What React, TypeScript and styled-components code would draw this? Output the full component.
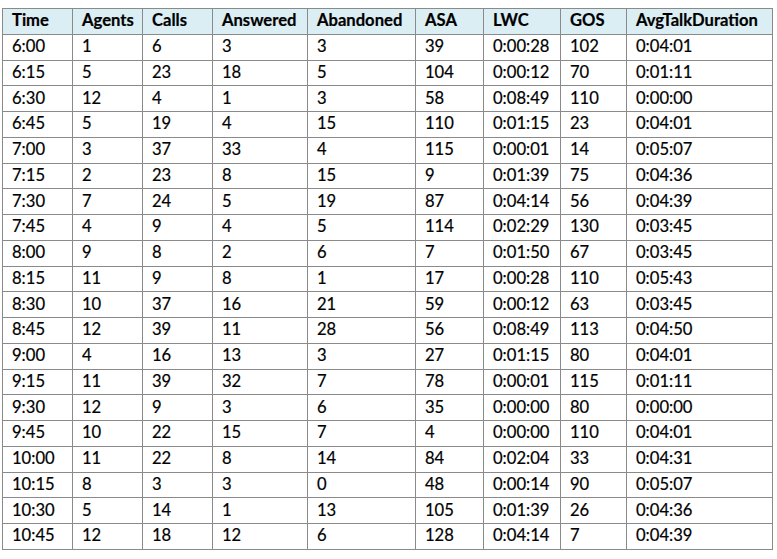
import React from "react";
import styled, { createGlobalStyle } from "styled-components";

const Global = createGlobalStyle`
  html, body { margin: 0; padding: 0; background: #ffffff; }
  body { font-family: Lato, "Open Sans", sans-serif; }
`;

const Page = styled.div`
  padding: 8px 0 0 2px;
`;

const Table = styled.table`
  border-collapse: collapse;
  table-layout: fixed;
  width: 770px;
  font-family: Lato, "Open Sans", sans-serif;
  font-size: 16.6px;
  color: #000000;
  border: 1px solid #5e5e5e;
`;

const Row = styled.tr<{ $head?: boolean }>`
  height: 25.76px;
  background: ${(p) => (p.$head ? "#dbeef3" : "#ffffff")};
`;

const Cell = styled.td`
  border: 1px solid #8a8a8a;
  padding: 0 0 2px 9px;
  white-space: nowrap;
  overflow: hidden;
  line-height: 20px;
  -webkit-text-stroke: 0.2px #000;
`;

const HeadCell = styled(Cell).attrs({ as: "th" })`
  font-weight: 700;
  text-align: left;
`;

const widths = [70, 70, 70, 95, 108, 68, 77, 66, 146];
const headers = ["Time", "Agents", "Calls", "Answered", "Abandoned", "ASA", "LWC", "GOS", "AvgTalkDuration"];

const rows: string[][] = [
  ["6:00", "1", "6", "3", "3", "39", "0:00:28", "102", "0:04:01"],
  ["6:15", "5", "23", "18", "5", "104", "0:00:12", "70", "0:01:11"],
  ["6:30", "12", "4", "1", "3", "58", "0:08:49", "110", "0:00:00"],
  ["6:45", "5", "19", "4", "15", "110", "0:01:15", "23", "0:04:01"],
  ["7:00", "3", "37", "33", "4", "115", "0:00:01", "14", "0:05:07"],
  ["7:15", "2", "23", "8", "15", "9", "0:01:39", "75", "0:04:36"],
  ["7:30", "7", "24", "5", "19", "87", "0:04:14", "56", "0:04:39"],
  ["7:45", "4", "9", "4", "5", "114", "0:02:29", "130", "0:03:45"],
  ["8:00", "9", "8", "2", "6", "7", "0:01:50", "67", "0:03:45"],
  ["8:15", "11", "9", "8", "1", "17", "0:00:28", "110", "0:05:43"],
  ["8:30", "10", "37", "16", "21", "59", "0:00:12", "63", "0:03:45"],
  ["8:45", "12", "39", "11", "28", "56", "0:08:49", "113", "0:04:50"],
  ["9:00", "4", "16", "13", "3", "27", "0:01:15", "80", "0:04:01"],
  ["9:15", "11", "39", "32", "7", "78", "0:00:01", "115", "0:01:11"],
  ["9:30", "12", "9", "3", "6", "35", "0:00:00", "80", "0:00:00"],
  ["9:45", "10", "22", "15", "7", "4", "0:00:00", "110", "0:04:01"],
  ["10:00", "11", "22", "8", "14", "84", "0:02:04", "33", "0:04:31"],
  ["10:15", "8", "3", "3", "0", "48", "0:00:14", "90", "0:05:07"],
  ["10:30", "5", "14", "1", "13", "105", "0:01:39", "26", "0:04:36"],
  ["10:45", "12", "18", "12", "6", "128", "0:04:14", "7", "0:04:39"],
];

export default function App() {
  return (
    <Page>
      <Global />
      <Table>
        <colgroup>
          {widths.map((w, i) => (
            <col key={i} style={{ width: w }} />
          ))}
        </colgroup>
        <thead>
          <Row $head>
            {headers.map((h) => (
              <HeadCell key={h}>{h}</HeadCell>
            ))}
          </Row>
        </thead>
        <tbody>
          {rows.map((r, i) => (
            <Row key={i}>
              {r.map((c, j) => (
                <Cell key={j}>{c}</Cell>
              ))}
            </Row>
          ))}
        </tbody>
      </Table>
    </Page>
  );
}
